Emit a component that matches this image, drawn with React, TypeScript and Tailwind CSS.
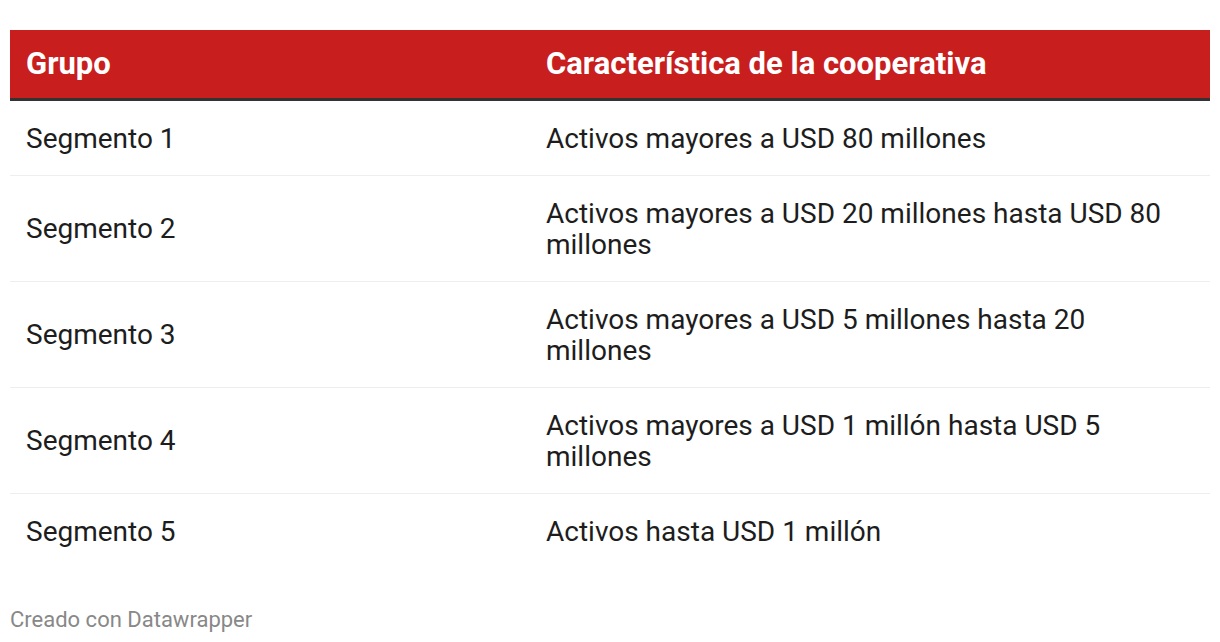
const rows: [string, string][] = [
  ["Segmento 1", "Activos mayores a USD 80 millones"],
  ["Segmento 2", "Activos mayores a USD 20 millones hasta USD 80 millones"],
  ["Segmento 3", "Activos mayores a USD 5 millones hasta 20 millones"],
  ["Segmento 4", "Activos mayores a USD 1 millón hasta USD 5 millones"],
  ["Segmento 5", "Activos hasta USD 1 millón"],
];

export default function App() {
  return (
    <div className="min-h-[642px] bg-white px-[10px] pt-[30px] font-['Roboto',sans-serif] text-[#1d1d1d]">
      <table className="w-full table-fixed border-collapse">
        <thead>
          <tr className="border-b-[3px] border-[#333333] bg-[#c81e1e] text-left text-white">
            <th className="w-[520px] px-4 py-4 text-[31px] leading-9 font-bold">Grupo</th>
            <th className="px-4 py-4 text-[31px] leading-9 font-bold">Característica de la cooperativa</th>
          </tr>
        </thead>
        <tbody>
          {rows.map(([group, desc], i) => (
            <tr key={group} className={i < rows.length - 1 ? "border-b border-[#eeeeee]" : ""}>
              <td className="px-4 py-[21.5px] align-middle text-[28px] leading-[31px]">{group}</td>
              <td className="py-[21.5px] pr-8 pl-4 align-middle text-[28px] leading-[31px]">{desc}</td>
            </tr>
          ))}
        </tbody>
      </table>
      <p className="mt-[40px] text-[22px] leading-6 text-[#888888]">Creado con Datawrapper</p>
    </div>
  );
}
